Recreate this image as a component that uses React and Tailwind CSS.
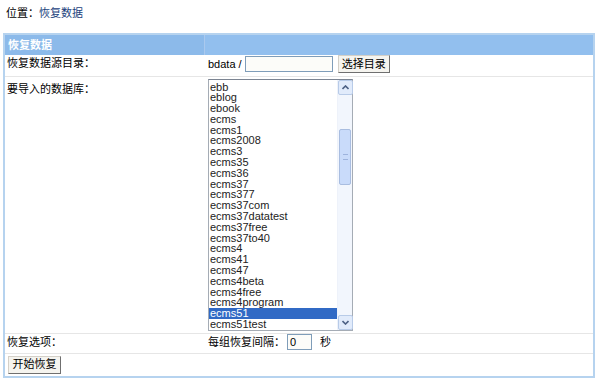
import React from "react";

const dbList = [
  "ebb",
  "eblog",
  "ebook",
  "ecms",
  "ecms1",
  "ecms2008",
  "ecms3",
  "ecms35",
  "ecms36",
  "ecms37",
  "ecms377",
  "ecms37com",
  "ecms37datatest",
  "ecms37free",
  "ecms37to40",
  "ecms4",
  "ecms41",
  "ecms47",
  "ecms4beta",
  "ecms4free",
  "ecms4program",
  "ecms51",
  "ecms51test",
];

const XpButton = ({ children, className = "" }) => (
  <button
    className={
      "border border-[#d4d0c8] border-r-[#6f6f6f] border-b-[#6f6f6f] bg-[#f5f4ef] text-[11px] text-black leading-none flex items-center justify-center " +
      className
    }
  >
    {children}
  </button>
);

const ScrollArrow = ({ up }) => (
  <div className="h-[15px] w-[15px] border border-[#b8cbe8] bg-[#e1ebfb] rounded-[2px] flex items-center justify-center">
    <svg width="7" height="5" viewBox="0 0 7 5">
      <path
        d={up ? "M0.5 4 L3.5 1 L6.5 4" : "M0.5 1 L3.5 4 L6.5 1"}
        fill="none"
        stroke="#4d6185"
        strokeWidth="1.6"
      />
    </svg>
  </div>
);

const App = () => {
  const cell = "border-b border-[#e6e6e6] align-top";

  return (
    <div className="w-[600px] h-[388px] bg-white text-[12px] text-[#333] font-['Liberation_Sans','Noto_Sans_CJK_SC',sans-serif]">
      {/* Position */}
      <div className="pt-[6px] pl-[6px] h-[33px] leading-[14px] text-[11px] text-black">
        位置：<a className="text-[#1a3f7c]">恢复数据</a>
      </div>

      {/* Table */}
      <div className="ml-[3px] w-[592px] border-2 border-[#b6d3ef]">
        <table className="w-full border-collapse">
          <tbody>
            <tr className="bg-[#8cbaea]">
              <td className="w-[199px] h-[20px] px-[3px] text-white font-bold text-[11px] border-r border-[#aac9ee]">
                恢复数据
              </td>
              <td className="bg-[#92bfee]"></td>
            </tr>
            <tr>
              <td className={cell + " h-[21px] px-[2px] align-middle text-black text-[11px]"}>
                恢复数据源目录：
              </td>
              <td className={cell + " align-middle px-[4px]"}>
                <div className="flex items-center gap-[3px]">
                  <span className="text-[11px] text-black">bdata /</span>
                  <input
                    className="w-[88px] h-[16px] border border-[#7f9db9] bg-[#fcfcf9] text-[11px] outline-none"
                    defaultValue=""
                  />
                  <XpButton className="w-[52px] h-[18px] ml-[2px]">选择目录</XpButton>
                </div>
              </td>
            </tr>
            <tr>
              <td className={cell + " px-[2px] pt-[4px] text-black text-[11px]"}>要导入的数据库：</td>
              <td className={cell + " pt-[2px] pb-[2px] px-[4px]"}>
                <div className="w-[145px] h-[252px] border border-[#a5acb5] border-t-[#7b8492] flex bg-white">
                  <div className="flex-1 pt-[2px] overflow-hidden">
                    {dbList.map((name) => (
                      <div
                        key={name}
                        className={
                          "h-[10.8px] leading-[11px] pl-[1px] text-[11px] " +
                          (name === "ecms51" ? "bg-[#316ac5] text-white" : "text-[#222]")
                        }
                      >
                        {name}
                      </div>
                    ))}
                  </div>
                  <div className="w-[15px] bg-[#f2f6fd] flex flex-col border-l border-[#eef2fa]">
                    <ScrollArrow up />
                    <div className="h-[34px]"></div>
                    <div className="h-[56px] mx-[1px] border border-[#a9bde0] rounded-[2px] bg-[#c9dbfa] flex items-center justify-center">
                      <div className="w-[5px] h-[6px] border-y border-[#9db3dd]"></div>
                    </div>
                    <div className="flex-1"></div>
                    <ScrollArrow />
                  </div>
                </div>
              </td>
            </tr>
            <tr>
              <td className={cell + " h-[20px] px-[2px] align-middle text-black text-[11px]"}>恢复选项：</td>
              <td className={cell + " align-middle px-[4px]"}>
                <div className="flex items-center text-[11px] text-black">
                  <span>每组恢复间隔：</span>
                  <input
                    className="w-[25px] h-[16px] border border-[#7f9db9] bg-[#fcfcf9] text-[11px] pl-[2px] outline-none ml-[2px]"
                    defaultValue="0"
                  />
                  <span className="ml-[8px]">秒</span>
                </div>
              </td>
            </tr>
            <tr>
              <td colSpan={2} className="h-[23px] px-[3px] align-middle">
                <XpButton className="w-[53px] h-[18px]">开始恢复</XpButton>
              </td>
            </tr>
          </tbody>
        </table>
      </div>
    </div>
  );
};

export default App;
